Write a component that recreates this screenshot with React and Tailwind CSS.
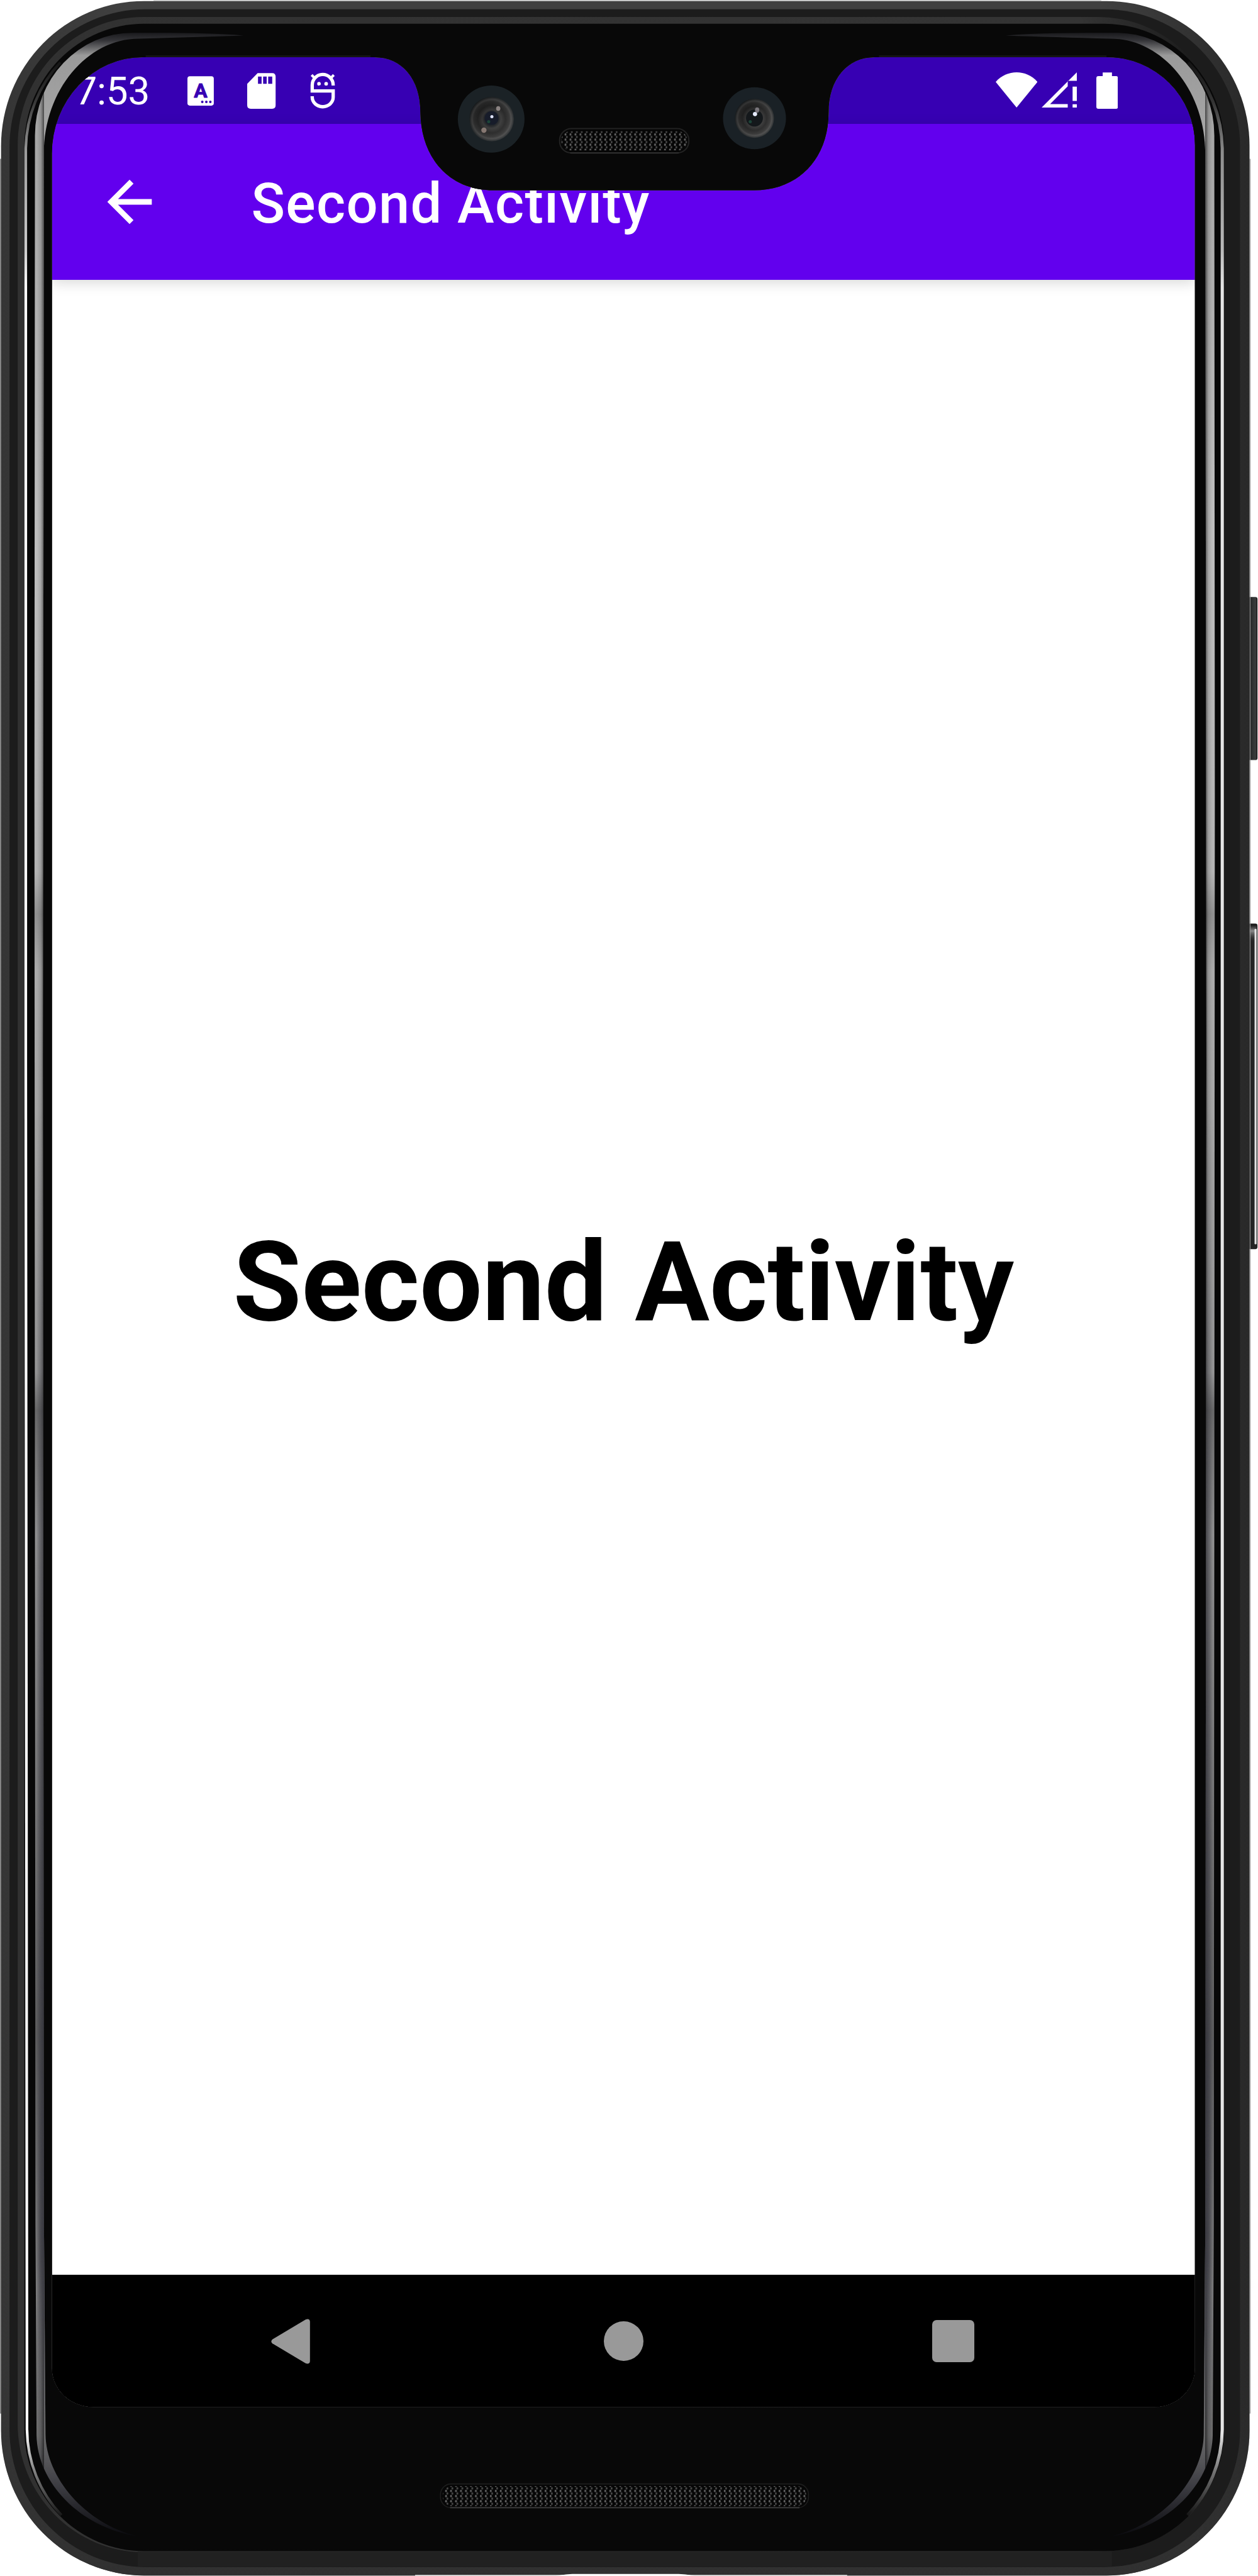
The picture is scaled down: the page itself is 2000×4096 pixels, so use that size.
import React from "react";

const SCREEN_PATH =
  "M270 108 H707 C760 108 794 150 794 212 C795 300 850 359.5 931 359.5 H1424 C1508 359.5 1565 300 1565 212 C1565 150 1600 108 1652 108 H2091 A166 166 0 0 1 2257 274 V4475 A76 73 0 0 1 2181 4548 H176 A78 73 0 0 1 98 4475 V290 A172 182 0 0 1 270 108 Z";

function EdgeHighlight() {
  const shape =
    "M460 67 C400 62 330 62 250 62 A184 194 0 0 0 66 256 L65 1500 L67 4200 L69 4600 C70 4690 150 4775 260 4792 C160 4768 87 4680 86 4600 L83 4200 L81 2000 L83 290 C83 170 165 73 262 73 C330 71 400 69 460 67 Z";
  return (
    <g>
      <path d={shape} fill="url(#rim)" />
      <path d={shape} fill="url(#rimInner)" />
      <path d={shape} fill="url(#rimLower)" mask="url(#lowerMask)" />
    </g>
  );
}

function DeviceFrame() {
  return (
    <svg
      className="pointer-events-none absolute inset-0 z-20 h-[4096px] w-[2000px]"
      viewBox="0 0 2376 4867"
      preserveAspectRatio="none"
      aria-hidden="true"
    >
      <defs>
        <clipPath id="bezel">
          <path clipRule="evenodd" d={"M0 0H2376V4867H0Z " + SCREEN_PATH} />
        </clipPath>
        <linearGradient id="shell" gradientUnits="userSpaceOnUse" x1="0" y1="0" x2="2360" y2="0">
          <stop offset="0" stopColor="#353535" />
          <stop offset="0.1" stopColor="#404040" />
          <stop offset="0.88" stopColor="#404040" />
          <stop offset="1" stopColor="#292929" />
        </linearGradient>
        <linearGradient id="shellShade" gradientUnits="userSpaceOnUse" x1="0" y1="4500" x2="0" y2="4866">
          <stop offset="0" stopColor="#303030" stopOpacity="0" />
          <stop offset="1" stopColor="#303030" />
        </linearGradient>
        <linearGradient id="innerBand" gradientUnits="userSpaceOnUse" x1="33" y1="0" x2="2312" y2="0">
          <stop offset="0" stopColor="#313131" />
          <stop offset="0.88" stopColor="#343434" />
          <stop offset="0.97" stopColor="#1d1d1d" />
        </linearGradient>
        <linearGradient id="rim" gradientUnits="userSpaceOnUse" x1="0" y1="62" x2="0" y2="4792">
          <stop offset="0" stopColor="#1a1a1d" />
          <stop offset="0.003" stopColor="#333337" />
          <stop offset="0.009" stopColor="#9a9a9a" />
          <stop offset="0.04" stopColor="#a6a6a6" />
          <stop offset="0.2" stopColor="#bdbdbd" />
          <stop offset="0.335" stopColor="#b2b2b2" />
          <stop offset="0.352" stopColor="#8f8f8f" />
          <stop offset="0.375" stopColor="#aaaaaa" />
          <stop offset="0.47" stopColor="#a0a0a0" />
          <stop offset="0.535" stopColor="#9a9a9a" />
          <stop offset="0.55" stopColor="#6c6c6c" />
          <stop offset="0.6" stopColor="#999999" />
          <stop offset="0.7" stopColor="#808080" />
          <stop offset="0.8" stopColor="#636363" />
          <stop offset="0.9" stopColor="#888888" />
          <stop offset="0.96" stopColor="#6e6e6e" />
          <stop offset="0.98" stopColor="#3c3c42" />
          <stop offset="1" stopColor="#0a0a0e" />
        </linearGradient>
        <linearGradient id="rimInner" gradientUnits="userSpaceOnUse" x1="70" y1="0" x2="83" y2="0">
          <stop offset="0" stopColor="#000" stopOpacity="0" />
          <stop offset="0.55" stopColor="#000" stopOpacity="0.12" />
          <stop offset="1" stopColor="#000" stopOpacity="0.55" />
          <stop offset="1" stopColor="#000" stopOpacity="0" />
        </linearGradient>
        <linearGradient id="rimLower" gradientUnits="userSpaceOnUse" x1="66" y1="0" x2="84" y2="0">
          <stop offset="0" stopColor="#3a3a42" stopOpacity="0" />
          <stop offset="0.6" stopColor="#3a3a42" stopOpacity="0.8" />
          <stop offset="1" stopColor="#3a3a42" stopOpacity="0.9" />
        </linearGradient>
        <linearGradient id="lowerFade" gradientUnits="userSpaceOnUse" x1="0" y1="2100" x2="0" y2="4650">
          <stop offset="0" stopColor="#000" />
          <stop offset="0.3" stopColor="#999" />
          <stop offset="0.85" stopColor="#fff" />
          <stop offset="1" stopColor="#000" />
        </linearGradient>
        <mask id="lowerMask" maskUnits="userSpaceOnUse" x="0" y="0" width="500" height="4867">
          <rect width="500" height="4867" fill="url(#lowerFade)" />
        </mask>
        <linearGradient id="wire" gradientUnits="userSpaceOnUse" x1="0" y1="100" x2="0" y2="4760">
          <stop offset="0" stopColor="#fff" stopOpacity="0.02" />
          <stop offset="0.02" stopColor="#fff" stopOpacity="0.2" />
          <stop offset="0.04" stopColor="#fff" stopOpacity="0.6" />
          <stop offset="0.08" stopColor="#fff" stopOpacity="0.8" />
          <stop offset="0.095" stopColor="#fff" />
          <stop offset="0.965" stopColor="#fff" />
          <stop offset="0.98" stopColor="#fff" stopOpacity="0.5" />
          <stop offset="1" stopColor="#fff" stopOpacity="0.03" />
        </linearGradient>
        <pattern id="mesh" patternUnits="userSpaceOnUse" x="1056" y="242" width="9.4" height="9.7">
          <ellipse cx="2.6" cy="2.4" rx="1.7" ry="2.3" fill="#666" />
          <ellipse cx="5.2" cy="7.2" rx="1.7" ry="2.3" fill="#4a4a4a" />
        </pattern>
        <linearGradient id="button" x1="0" y1="0" x2="1" y2="0">
          <stop offset="0" stopColor="#1c1e1e" />
          <stop offset="0.6" stopColor="#333636" />
          <stop offset="0.8" stopColor="#3a3c3c" />
          <stop offset="1" stopColor="#141414" />
        </linearGradient>
        <linearGradient id="cap" x1="0" y1="0" x2="0" y2="1">
          <stop offset="0" stopColor="#111" />
          <stop offset="0.35" stopColor="#8a8a8a" />
          <stop offset="1" stopColor="#222" stopOpacity="0" />
        </linearGradient>
        <radialGradient id="lens" cx="0.5" cy="0.5" r="0.5">
          <stop offset="0" stopColor="#1c2030" />
          <stop offset="0.3" stopColor="#10151a" />
          <stop offset="0.42" stopColor="#383838" />
          <stop offset="0.62" stopColor="#191919" />
          <stop offset="0.8" stopColor="#2c2c2c" />
          <stop offset="0.88" stopColor="#4a4a4a" />
          <stop offset="1" stopColor="#13191c" />
        </radialGradient>
        <linearGradient id="lensShade" x1="0" y1="0" x2="1" y2="1">
          <stop offset="0" stopColor="#050505" stopOpacity="0.5" />
          <stop offset="1" stopColor="#777" stopOpacity="0.3" />
        </linearGradient>
      </defs>

      <g clipPath="url(#bezel)">
        <rect width="2376" height="4867" fill="#fff" />

        <rect x="2357" y="1128" width="18" height="308" rx="4" fill="url(#button)" />
        <rect x="2357" y="1745" width="18" height="615" rx="4" fill="#242424" />
        <rect x="2358" y="1747" width="15" height="34" fill="url(#cap)" />
        <rect x="2369.5" y="1755" width="3.8" height="596" rx="1.5" fill="#e2e2e2" />

        <path d="M290 1H2080" stroke="#d2d3d3" strokeWidth="2.4" />
        <path d="M1 300V4560" stroke="#8a8a8a" strokeWidth="2.4" />
        <path d="M2361 300V4560" stroke="#8f8f8f" strokeWidth="1.6" />
        <rect x="2" y="2" width="2358" height="4864" rx="270" ry="274" fill="url(#shell)" />
        <rect x="2" y="2" width="2358" height="4864" rx="270" ry="274" fill="url(#shellShade)" />
        <rect x="18" y="17.5" width="2324" height="4832.5" rx="256" ry="260" fill="#1c1c1c" />
        <rect x="33.5" y="32" width="2278" height="4790" rx="238" ry="242" fill="url(#innerBand)" />
        <path d="M260 4835H2100" stroke="#212121" strokeWidth="28" />
        <rect x="46" y="45" width="2266" height="4775" rx="226" ry="230" fill="#080808" />
        <path d="M784 4866H1600" stroke="#e4e4e4" strokeWidth="2.4" />
        <path d="M1050 4867C1066 4864 1072 4863 1086 4863H1276C1292 4863 1298 4864 1312 4867Z" fill="#fff" />

        <path d="M114 118 A222 236 0 0 0 48.7 280 V2000 L51 4590 A222 232 0 0 0 116 4752" fill="none" stroke="url(#wire)" strokeWidth="5" />
        <path d="M2244 118 A222 236 0 0 1 2308.5 280 V4590 A222 232 0 0 1 2243 4752" fill="none" stroke="url(#wire)" strokeWidth="6" opacity="0.9" />
        <EdgeHighlight />
        <g transform="translate(2359.5 0) scale(-1 1)">
          <EdgeHighlight />
        </g>
        <path d="M275 106.5H700M1660 106.5H2090" stroke="#151515" strokeWidth="4" />

        <ellipse cx="927.7" cy="225" rx="63" ry="63.5" fill="#1b2226" />
        <circle cx="928.5" cy="225" r="42" fill="url(#lens)" />
        <circle cx="928.5" cy="225" r="42" fill="url(#lensShade)" />
        <circle cx="928.5" cy="223" r="13" fill="#171c2a" />
        <circle cx="929" cy="220.5" r="3" fill="#dfe4ff" />
        <ellipse cx="941" cy="205" rx="4" ry="4.5" fill="#a49a98" opacity="0.8" />
        <ellipse cx="914" cy="246" rx="5" ry="5" fill="#a4928a" opacity="0.75" />
        <circle cx="923" cy="230" r="3" fill="#1c4438" />

        <ellipse cx="1425" cy="223.5" rx="59.5" ry="58.5" fill="#1a2126" />
        <circle cx="1425" cy="223.5" r="37" fill="url(#lens)" />
        <circle cx="1425" cy="223.5" r="37" fill="url(#lensShade)" />
        <circle cx="1425" cy="223" r="16" fill="#14181b" />
        <circle cx="1426" cy="215.5" r="4" fill="#e6ebff" />
        <ellipse cx="1430" cy="208" rx="4" ry="5" fill="#8d8890" opacity="0.8" />
        <circle cx="1417" cy="230" r="3" fill="#1c4438" />

        <rect x="1057" y="243" width="244" height="46" rx="22" fill="#060606" stroke="#222" strokeWidth="2.5" />
        <rect x="1060" y="248" width="238" height="36" rx="17" fill="url(#mesh)" />
        <path d="M1077 289H1282" stroke="#363636" strokeWidth="2" />
        <rect x="832" y="4693" width="695" height="45" rx="20" fill="#060606" stroke="#1d1d1d" strokeWidth="2" />
        <rect x="836" y="4697" width="687" height="38" rx="18" fill="url(#mesh)" />
        <path d="M850 4738H1510" stroke="#3d3d3d" strokeWidth="2" />
      </g>
    </svg>
  );
}

function KeyboardIcon() {
  return (
    <svg className="h-[67.3px] w-[42.1px]" viewBox="354 131 50 80" fill="#fff">
      <rect x="354" y="144.3" width="49.8" height="55.5" rx="4.5" />
      <text x="379" y="184.6" textAnchor="middle" fontSize="38" fontWeight="700" fontFamily="Roboto, sans-serif" fill="#3700b3" stroke="#3700b3" strokeWidth="1" strokeLinejoin="round">
        A
      </text>
      <g fill="#3700b3">
        <circle cx="382" cy="192.7" r="2.4" />
        <circle cx="389.7" cy="192.7" r="2.4" />
        <circle cx="397.2" cy="192.7" r="2.4" />
      </g>
    </svg>
  );
}

function SdCardIcon() {
  return (
    <svg className="ml-[53.3px] h-[67.3px] w-[45.2px]" viewBox="467.3 131 53.7 80" fill="#fff">
      <path d="M487 138.3H514.5Q521 138.3 521 145V199Q521 205.8 514.5 205.8H474Q467.3 205.8 467.3 199V158.5Z" />
      <path fill="#3700b3" d="M487.7 145H494.5V158.7H487.7ZM497.4 145H504.1V158.7H497.4ZM507 145H514.6V158.7H507Z" />
    </svg>
  );
}

function DebugIcon() {
  return (
    <svg className="ml-[53.9px] h-[67.3px] w-[42.1px]" viewBox="585 131 50 80" fill="none" stroke="#fff" strokeWidth="6.3">
      <path d="M629.8 162V161A19.8 20 0 0 0 590.2 161V172.2H629.8V184A19.8 18 0 0 1 590.2 184V182" />
      <path d="M589 142L594.5 147.5M631 142L625.5 147.5" strokeWidth="5" />
      <circle cx="603" cy="158.5" r="3.4" fill="#fff" stroke="none" />
      <circle cx="616.5" cy="158.5" r="3.4" fill="#fff" stroke="none" />
    </svg>
  );
}

function StatusBar() {
  return (
    <div className="flex h-[106px] items-center bg-[#3700b3] pr-[122.9px] pl-[37px]">
      <span className="w-[178.5px] pt-[4px] text-[61.9px] leading-none tracking-[-0.2px] whitespace-nowrap text-white">7:53</span>
      <KeyboardIcon />
      <SdCardIcon />
      <DebugIcon />
      <svg className="ml-auto h-[67.3px] w-[66.5px]" viewBox="1880 131 79 80" fill="#fff">
        <path d="M1880 155C1901 131 1938 131 1959 155L1919.4 203.6Z" />
      </svg>
      <svg className="ml-[6.3px] h-[67.3px] w-[56px]" viewBox="1966.5 131 66.5 80" fill="#fff">
        <path d="M1966.5 203.6L2033 137V153H2015.8V163.5L1982.5 197H2015.8V203.6Z" />
        <path d="M2025 164H2033V191H2025ZM2025 197.3H2033V203.6H2025Z" />
      </svg>
      <svg className="ml-[31.1px] h-[67.3px] w-[34.5px]" viewBox="2070 131 41 80" fill="#fff">
        <path d="M2082 144V137.3H2099.5V144H2107Q2111 144 2111 148V202Q2111 205.8 2107 205.8H2074Q2070 205.8 2070 202V148Q2070 144 2074 144Z" />
      </svg>
    </div>
  );
}

function AppBar() {
  return (
    <header className="relative z-10 flex h-[247.5px] items-center bg-[#6200ee] pl-[70.5px] text-white shadow-[0_5px_20px_rgba(0,0,0,0.15)]">
      <svg className="h-[106px] w-[106px]" viewBox="0 0 24 24" fill="currentColor">
        <path d="M20 11H7.83l5.59-5.59L12 4l-8 8 8 8 1.41-1.41L7.83 13H20v-2z" />
      </svg>
      <h1 className="ml-[140.5px] pt-[6px] text-[88.4px] leading-none font-medium tracking-[1.35px] whitespace-nowrap">Second Activity</h1>
    </header>
  );
}

function NavBar() {
  return (
    <nav className="flex h-[212px] items-center bg-black text-[#999999]">
      <svg className="ml-[348px] h-[72px] w-[62px]" viewBox="0 0 73.5 85" fill="currentColor">
        <path d="M2.5 38.5L65 1.2Q73.3-1.5 73.3 6V79Q73.3 86.5 65 83.8L2.5 46.5Q-1.8 42.5 2.5 38.5Z" />
      </svg>
      <div className="ml-[467px] size-[63px] rounded-full bg-current" />
      <div className="ml-[459px] h-[67px] w-[67px] rounded-[7px] bg-current" />
    </nav>
  );
}

export default function App() {
  return (
    <div className="relative h-[4096px] w-[2000px] overflow-hidden bg-white font-[Roboto,sans-serif]">
      <div className="mt-[91px] ml-[82.5px] flex h-[3737.5px] w-[1817.5px] flex-col">
        <StatusBar />
        <AppBar />
        <main className="flex flex-1 items-center justify-center bg-white pt-[18px]">
          <p className="text-[176.8px] leading-none font-bold whitespace-nowrap text-black">Second Activity</p>
        </main>
        <NavBar />
      </div>
      <DeviceFrame />
    </div>
  );
}
